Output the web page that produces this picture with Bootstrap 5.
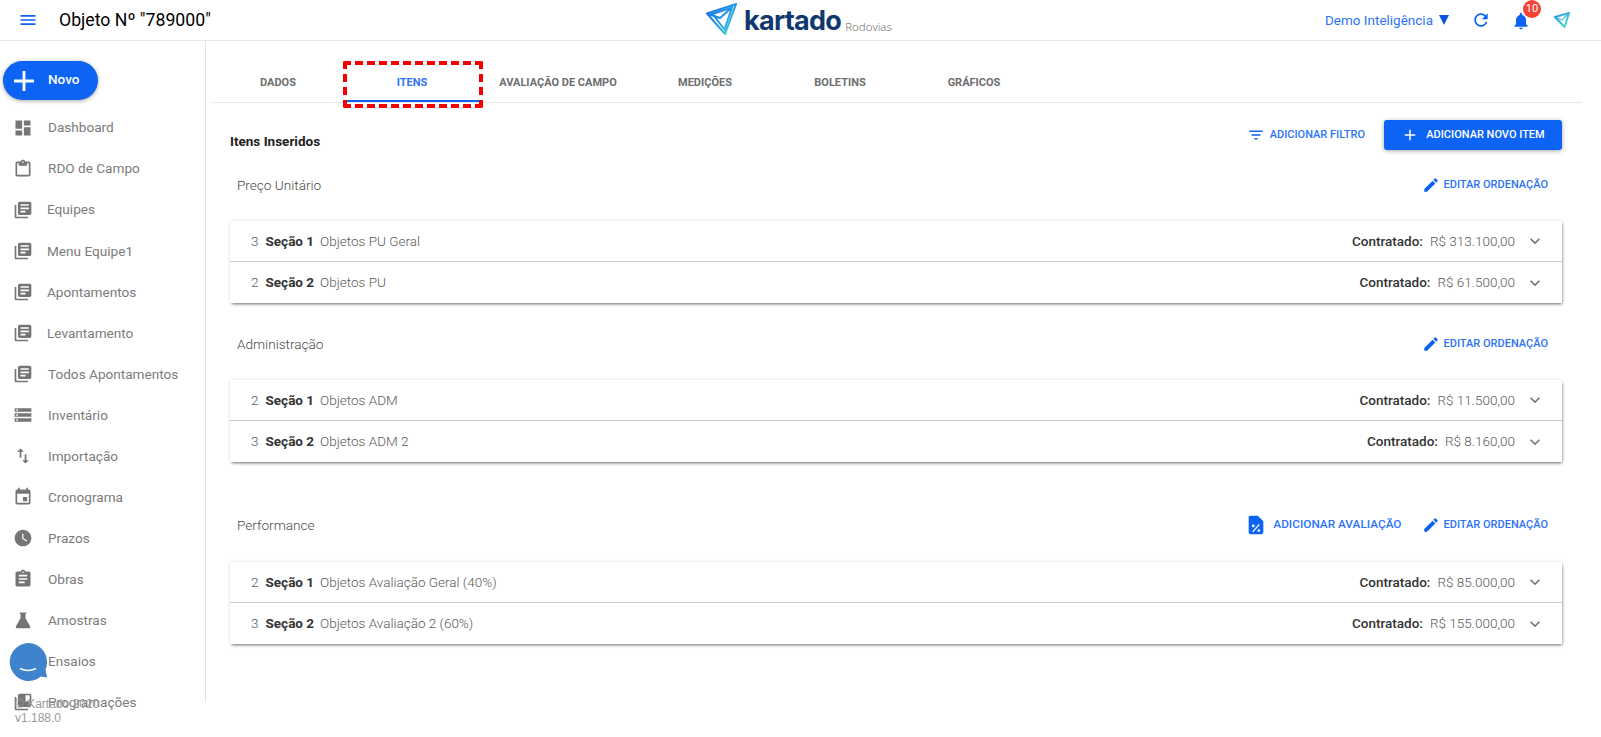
<!DOCTYPE html>
<html lang="pt-BR">
<head>
<meta charset="utf-8">
<title>Objeto</title>
<link href="https://cdn.jsdelivr.net/npm/bootstrap@5.3.0/dist/css/bootstrap.min.css" rel="stylesheet">
<style>
html,body{height:737px;overflow:hidden}
body{font-family:Roboto,"Liberation Sans",sans-serif;font-size:13.5px;color:#212121;background:#fff}
.top-bar{height:41px;border-bottom:1px solid #e8e8e8;position:relative}
.burger{width:20px;height:20px;margin-left:18px;fill:#0d63f3}
.page-title{font-size:17.7px;color:#000;margin-left:21px;line-height:24px}
.logo-wrap{position:absolute;left:706px;top:3px;display:flex;align-items:flex-end;height:32px}
.logo-word{font-family:Inter,"Liberation Sans",sans-serif;font-weight:700;font-size:27px;letter-spacing:-.7px;color:#10386f;line-height:28px;margin-left:7px}
.logo-sub{font-size:11.5px;font-weight:300;color:#5f5f5f;margin-left:4px;line-height:14px;font-family:"Open Sans",sans-serif;margin-bottom:1px}
.top-right{margin-left:auto;padding-right:31px}
.user-name{font-size:13.5px;color:#2d74f5;margin-right:6px}
.user-caret{width:0;height:0;border-left:5px solid transparent;border-right:5px solid transparent;border-top:10px solid #0d57e0;margin-right:22px}
.bell-box{position:relative;width:20px;height:20px;margin:0 23px 0 20px}
.bell-count{position:absolute;left:12px;top:-10px;width:18px;height:18px;border-radius:50%;background:#f44336;color:#fff;font-size:11px;line-height:18px;text-align:center}
.shell{height:696px}
.side-col{width:206px;flex:none;border-right:1px solid #e3e3e3;height:661px;position:relative}
.new-btn{width:95px;height:39px;margin:20px 0 0 3px;border-radius:20px;background:#0d63f3;color:#fff;font-weight:500;font-size:13.5px;box-shadow:0 1px 4px rgba(0,0,0,.35);padding:0 0 0 4px;border:0}
.new-btn svg{width:34px;height:34px;fill:#fff;margin-right:7px}
.new-btn span{position:relative;top:-1px}
.menu-list{margin:7px 0 0;padding:0;list-style:none}
.menu-row{height:41.07px;display:flex;align-items:center;padding-left:13px;color:#7b7b7b;font-size:13.6px;white-space:nowrap}
.menu-row svg{width:20px;height:20px;fill:#757575;flex:none;margin-right:15px}
.menu-row.tight svg{margin-right:14px}
.main-col{flex:1;min-width:0;padding:0 19px 0 5px}
.tab-strip{height:62px;border-bottom:1px solid #e8e8e8;padding-top:9px;position:relative}
.tab-item{width:134px;height:52px;display:flex;align-items:center;justify-content:center;font-size:11px;font-weight:700;color:#6e6e6e;padding-top:17px;border-bottom:2px solid transparent}
.tab-item.wide{width:158px}
.tab-item.mid{width:136px}
.tab-item.on{color:#2d74f5;border-bottom-color:#0d63f3}
.callout{position:absolute;left:132px;top:20px;width:140px;height:47px;border:4px dashed #f50000;border-radius:2px;pointer-events:none}
.content-wrap{padding:0 20px 0 19px}
.head-row{height:38px;margin-top:15px}
.head-title{font-size:13.5px;font-weight:700;color:#212121;position:relative;top:4px}
.head-actions{margin-top:-4px}
.link-act{color:#2d74f5;font-size:11px;font-weight:500;display:inline-flex;align-items:center;text-decoration:none;white-space:nowrap}
.link-act svg{fill:#0d63f3;flex:none}
.filter-ico{margin-right:5px}
.add-item{width:178px;height:30px;border-radius:3px;background:#0d63f3;color:#fff;font-size:11px;font-weight:500;border:0;box-shadow:0 1px 4px rgba(0,0,0,.35);margin-left:19px;padding:0}
.add-item svg{width:18px;height:18px;fill:#fff;margin-right:7px}
.group-head{height:36px;padding:0 14px 0 7px;color:#4a4a4a;font-size:13.6px;font-weight:300}
.group-a{margin-top:11px;margin-bottom:18px}
.group-b{margin-top:23px;margin-bottom:18px}
.group-c{margin-top:45px;margin-bottom:19px}
.perf-link{font-size:11.8px;margin-right:20px}
.perf-ico{margin-right:6px}
.group-list{border:0;border-radius:0;box-shadow:1px 2px 3px -1px rgba(0,0,0,.55),0 0 3px rgba(0,0,0,.12);margin-bottom:0}
.sec-row{height:41px;display:flex;align-items:center;padding:0 17px 0 21px;font-size:13.5px;color:#5a5a5a;font-weight:300;border-bottom:1px solid #c9c9c9}
.sec-row:last-child{border-bottom:0}
.sec-row b{font-weight:700;color:#333;margin:0 6px 0 7px}
.sec-row .amt-lbl{margin-left:auto;font-weight:500;color:#333;margin-right:7px}
.sec-row svg{width:20px;height:20px;fill:#757575;margin-left:10px}
.copyline{position:absolute;left:15px;top:697px;font-family:"Liberation Sans",sans-serif;font-size:12px;line-height:14px;color:#9a9a9a}
.chat-bubble{position:absolute;left:9px;top:643px;width:38px;height:40px}
</style>
</head>
<body>
<header class="top-bar d-flex align-items-center">
  <svg class="burger" viewBox="0 0 24 24"><path d="M3 18h18v-2H3v2zm0-5h18v-2H3v2zm0-7v2h18V6H3z"/></svg>
  <div class="page-title">Objeto Nº "789000"</div>
  <div class="logo-wrap">
    <svg width="31" height="32" viewBox="0 0 31 32"><defs><linearGradient id="lg" x1="0" y1="0" x2="1" y2="1"><stop offset="0" stop-color="#1268e6"/><stop offset=".6" stop-color="#2aa4e4"/><stop offset="1" stop-color="#4fe0cc"/></linearGradient></defs><path d="M1 10.500 30 1 19 31 Z M6.500 11 18.500 26.500 26 4.500 Z M1 10.500 14 15 26 4.500" fill="none" stroke="url(#lg)" stroke-width="2"/></svg>
    <span class="logo-word">kartado</span><span class="logo-sub">Rodovias</span>
  </div>
  <div class="top-right d-flex align-items-center">
    <span class="user-name">Demo Inteligência</span><span class="user-caret"></span>
    <svg width="20" height="20" viewBox="0 0 24 24" fill="#0d63f3"><path d="M17.650 6.350C16.200 4.900 14.210 4 12 4c-4.420 0-7.990 3.580-7.990 8s3.570 8 7.990 8c3.730 0 6.840-2.550 7.730-6h-2.080c-.82 2.330-3.040 4-5.650 4-3.310 0-6-2.690-6-6s2.690-6 6-6c1.660 0 3.140.69 4.220 1.780L13 11h7V4l-2.350 2.350z"/></svg>
    <div class="bell-box">
      <svg width="20" height="20" viewBox="0 0 24 24" fill="#0d63f3"><path d="M12 22c1.100 0 2-.9 2-2h-4c0 1.100.89 2 2 2zm6-6v-5c0-3.070-1.640-5.640-4.500-6.320V4c0-.83-.67-1.500-1.500-1.500s-1.500.67-1.500 1.500v.68C7.630 5.360 6 7.920 6 11v5l-2 2v1h16v-1l-2-2z"/></svg>
      <span class="bell-count">10</span>
    </div>
    <svg width="16" height="16" viewBox="0 0 16 16"><defs><linearGradient id="lg2" x1="0" y1="0" x2="1" y2="1"><stop offset="0" stop-color="#2a8fe8"/><stop offset="1" stop-color="#4fe0cc"/></linearGradient></defs><path d="M1 5 15 1 10.500 15 Z" fill="none" stroke="url(#lg2)" stroke-width="2"/><path d="M1 5 8 8 14 2" fill="none" stroke="url(#lg2)" stroke-width="1.200"/></svg>
  </div>
</header>
<div class="shell d-flex">
  <aside class="side-col">
    <button class="new-btn btn d-flex align-items-center">
      <svg viewBox="0 0 24 24"><path d="M19 13h-6v6h-2v-6H5v-2h6V5h2v6h6v2z"/></svg><span>Novo</span>
    </button>
    <ul class="menu-list">
      <li class="menu-row"><svg viewBox="0 0 24 24"><path d="M3 13h8V3H3v10zm0 8h8v-6H3v6zm10 0h8V11h-8v10zm0-18v6h8V3h-8z"/></svg>Dashboard</li>
      <li class="menu-row"><svg viewBox="0 0 24 24"><path d="M19 3h-4.180C14.400 1.840 13.300 1 12 1c-1.300 0-2.400.84-2.820 2H5c-1.100 0-2 .9-2 2v14c0 1.100.9 2 2 2h14c1.100 0 2-.9 2-2V5c0-1.100-.9-2-2-2zm-7 0c.55 0 1 .45 1 1s-.45 1-1 1-1-.45-1-1 .45-1 1-1zm7 16H5V5h2v3h10V5h2v14z"/></svg>RDO de Campo</li>
      <li class="menu-row tight"><svg viewBox="0 0 24 24"><path d="M4 6H2v14c0 1.100.9 2 2 2h14v-2H4V6zm16-4H8c-1.100 0-2 .9-2 2v12c0 1.100.9 2 2 2h12c1.100 0 2-.9 2-2V4c0-1.100-.9-2-2-2zm-1 9H9V9h10v2zm-4 4H9v-2h6v2zm4-8H9V5h10v2z"/></svg>Equipes</li>
      <li class="menu-row tight"><svg viewBox="0 0 24 24"><path d="M4 6H2v14c0 1.100.9 2 2 2h14v-2H4V6zm16-4H8c-1.100 0-2 .9-2 2v12c0 1.100.9 2 2 2h12c1.100 0 2-.9 2-2V4c0-1.100-.9-2-2-2zm-1 9H9V9h10v2zm-4 4H9v-2h6v2zm4-8H9V5h10v2z"/></svg>Menu Equipe1</li>
      <li class="menu-row tight"><svg viewBox="0 0 24 24"><path d="M4 6H2v14c0 1.100.9 2 2 2h14v-2H4V6zm16-4H8c-1.100 0-2 .9-2 2v12c0 1.100.9 2 2 2h12c1.100 0 2-.9 2-2V4c0-1.100-.9-2-2-2zm-1 9H9V9h10v2zm-4 4H9v-2h6v2zm4-8H9V5h10v2z"/></svg>Apontamentos</li>
      <li class="menu-row tight"><svg viewBox="0 0 24 24"><path d="M4 6H2v14c0 1.100.9 2 2 2h14v-2H4V6zm16-4H8c-1.100 0-2 .9-2 2v12c0 1.100.9 2 2 2h12c1.100 0 2-.9 2-2V4c0-1.100-.9-2-2-2zm-1 9H9V9h10v2zm-4 4H9v-2h6v2zm4-8H9V5h10v2z"/></svg>Levantamento</li>
      <li class="menu-row"><svg viewBox="0 0 24 24"><path d="M4 6H2v14c0 1.100.9 2 2 2h14v-2H4V6zm16-4H8c-1.100 0-2 .9-2 2v12c0 1.100.9 2 2 2h12c1.100 0 2-.9 2-2V4c0-1.100-.9-2-2-2zm-1 9H9V9h10v2zm-4 4H9v-2h6v2zm4-8H9V5h10v2z"/></svg>Todos Apontamentos</li>
      <li class="menu-row"><svg viewBox="0 0 24 24"><path d="M2 20h20v-4H2v4zm2-3h2v2H4v-2zM2 4v4h20V4H2zm4 3H4V5h2v2zm-4 7h20v-4H2v4zm2-3h2v2H4v-2z"/></svg>Inventário</li>
      <li class="menu-row"><svg viewBox="0 0 24 24"><path d="M16 17.010V10h-2v7.010h-3L15 21l4-3.990h-3zM9 3L5 6.990h3V14h2V6.990h3L9 3z"/></svg>Importação</li>
      <li class="menu-row"><svg viewBox="0 0 24 24"><path d="M17 12h-5v5h5v-5zM16 1v2H8V1H6v2H5c-1.110 0-1.990.9-1.990 2L3 19c0 1.100.89 2 2 2h14c1.100 0 2-.9 2-2V5c0-1.100-.9-2-2-2h-1V1h-2zm3 18H5V8h14v11z"/></svg>Cronograma</li>
      <li class="menu-row"><svg viewBox="0 0 24 24"><path d="M12 2C6.500 2 2 6.500 2 12s4.500 10 10 10 10-4.500 10-10S17.500 2 12 2zm4.200 14.200L11 13V7h1.500v5.200l4.500 2.700-.8 1.300z"/></svg>Prazos</li>
      <li class="menu-row"><svg viewBox="0 0 24 24"><path d="M19 3h-4.180C14.400 1.840 13.300 1 12 1c-1.300 0-2.400.84-2.820 2H5c-1.100 0-2 .9-2 2v14c0 1.100.9 2 2 2h14c1.100 0 2-.9 2-2V5c0-1.100-.9-2-2-2zm-7 0c.55 0 1 .45 1 1s-.45 1-1 1-1-.45-1-1 .45-1 1-1zm2 14H7v-2h7v2zm3-4H7v-2h10v2zm0-4H7V7h10v2z"/></svg>Obras</li>
      <li class="menu-row"><svg viewBox="0 0 24 24"><path d="M8 3h8v1.500h-1V10l5.500 9.500c.6 1.100-.1 2.500-1.500 2.500H5c-1.400 0-2.100-1.400-1.500-2.500L9 10V4.500H8z"/></svg>Amostras</li>
      <li class="menu-row"><svg viewBox="0 0 24 24"></svg>Ensaios</li>
      <li class="menu-row"><svg viewBox="0 0 24 24"><path d="M4 6H2v14c0 1.100.9 2 2 2h14v-2H4V6zm16-4H8c-1.100 0-2 .9-2 2v12c0 1.100.9 2 2 2h12c1.100 0 2-.9 2-2V4c0-1.100-.9-2-2-2zm0 10l-2.500-1.500L15 12V4h5v8z"/></svg>Programações</li>
    </ul>
  </aside>
  <main class="main-col">
    <nav class="tab-strip d-flex">
      <div class="tab-item">DADOS</div>
      <div class="tab-item on">ITENS</div>
      <div class="tab-item wide">AVALIAÇÃO DE CAMPO</div>
      <div class="tab-item mid">MEDIÇÕES</div>
      <div class="tab-item">BOLETINS</div>
      <div class="tab-item">GRÁFICOS</div>
      <div class="callout"></div>
    </nav>
    <div class="content-wrap">
      <div class="head-row d-flex align-items-center">
        <div class="head-title">Itens Inseridos</div>
        <div class="head-actions ms-auto d-flex align-items-center">
          <a class="link-act"><svg width="18" height="18" viewBox="0 0 24 24" class="filter-ico"><path d="M10 18h4v-2h-4v2zM3 6v2h18V6H3zm3 7h12v-2H6v2z"/></svg>ADICIONAR FILTRO</a>
          <button class="add-item btn d-flex align-items-center justify-content-center"><svg viewBox="0 0 24 24"><path d="M19 13h-6v6h-2v-6H5v-2h6V5h2v6h6v2z"/></svg>ADICIONAR NOVO ITEM</button>
        </div>
      </div>
      <div class="group-head group-a d-flex align-items-center justify-content-between">
        <span>Preço Unitário</span>
        <a class="link-act"><svg width="18" height="18" viewBox="0 0 24 24" class="me-1"><path d="M3 17.250V21h3.750L17.810 9.940l-3.750-3.750L3 17.250zM20.710 7.040c.39-.39.39-1.020 0-1.410l-2.340-2.340c-.39-.39-1.020-.39-1.410 0l-1.830 1.830 3.750 3.750 1.830-1.830z"/></svg>EDITAR ORDENAÇÃO</a>
      </div>
      <div class="group-list list-group">
        <div class="sec-row">3<b>Seção 1</b>Objetos PU Geral<span class="amt-lbl">Contratado:</span>R$ 313.100,00<svg viewBox="0 0 24 24"><path d="M16.590 8.590L12 13.170 7.410 8.590 6 10l6 6 6-6z"/></svg></div>
        <div class="sec-row">2<b>Seção 2</b>Objetos PU<span class="amt-lbl">Contratado:</span>R$ 61.500,00<svg viewBox="0 0 24 24"><path d="M16.590 8.590L12 13.170 7.410 8.590 6 10l6 6 6-6z"/></svg></div>
      </div>
      <div class="group-head group-b d-flex align-items-center justify-content-between">
        <span>Administração</span>
        <a class="link-act"><svg width="18" height="18" viewBox="0 0 24 24" class="me-1"><path d="M3 17.250V21h3.750L17.810 9.940l-3.750-3.750L3 17.250zM20.710 7.040c.39-.39.39-1.020 0-1.410l-2.340-2.340c-.39-.39-1.020-.39-1.410 0l-1.830 1.830 3.750 3.750 1.830-1.830z"/></svg>EDITAR ORDENAÇÃO</a>
      </div>
      <div class="group-list list-group">
        <div class="sec-row">2<b>Seção 1</b>Objetos ADM<span class="amt-lbl">Contratado:</span>R$ 11.500,00<svg viewBox="0 0 24 24"><path d="M16.590 8.590L12 13.170 7.410 8.590 6 10l6 6 6-6z"/></svg></div>
        <div class="sec-row">3<b>Seção 2</b>Objetos ADM 2<span class="amt-lbl">Contratado:</span>R$ 8.160,00<svg viewBox="0 0 24 24"><path d="M16.590 8.590L12 13.170 7.410 8.590 6 10l6 6 6-6z"/></svg></div>
      </div>
      <div class="group-head group-c d-flex align-items-center">
        <span>Performance</span>
        <a class="link-act ms-auto perf-link"><svg width="22" height="22" viewBox="0 0 24 24" class="perf-ico"><path fill-rule="evenodd" d="M14 2H6c-1.100 0-2 .9-2 2v16c0 1.100.9 2 2 2h12c1.100 0 2-.9 2-2V8l-6-6zm-5 9.500a1.500 1.500 0 1 1 0 3 1.500 1.500 0 0 1 0-3zm6 5a1.500 1.500 0 1 1 0 3 1.500 1.500 0 0 1 0-3zM15 11l1 1-7 8-1-1z"/></svg>ADICIONAR AVALIAÇÃO</a>
        <a class="link-act"><svg width="18" height="18" viewBox="0 0 24 24" class="me-1"><path d="M3 17.250V21h3.750L17.810 9.940l-3.750-3.750L3 17.250zM20.710 7.040c.39-.39.39-1.020 0-1.410l-2.340-2.340c-.39-.39-1.020-.39-1.410 0l-1.830 1.830 3.750 3.750 1.830-1.830z"/></svg>EDITAR ORDENAÇÃO</a>
      </div>
      <div class="group-list list-group">
        <div class="sec-row">2<b>Seção 1</b>Objetos Avaliação Geral (40%)<span class="amt-lbl">Contratado:</span>R$ 85.000,00<svg viewBox="0 0 24 24"><path d="M16.590 8.590L12 13.170 7.410 8.590 6 10l6 6 6-6z"/></svg></div>
        <div class="sec-row">3<b>Seção 2</b>Objetos Avaliação 2 (60%)<span class="amt-lbl">Contratado:</span>R$ 155.000,00<svg viewBox="0 0 24 24"><path d="M16.590 8.590L12 13.170 7.410 8.590 6 10l6 6 6-6z"/></svg></div>
      </div>
    </div>
  </main>
</div>
<div class="copyline">© Kartado 2020<br>v1.188.0</div>
<svg class="chat-bubble" viewBox="0 0 38 40"><path d="M19 0a19 19 0 0 1 17.500 26.500L38 34.500 32 33.500A19 19 0 1 1 19 0z" fill="#3f83cc"/><path d="M11 25.500q8 4 16 0" stroke="#fff" stroke-width="1.500" fill="none"/></svg>
</body>
</html>
